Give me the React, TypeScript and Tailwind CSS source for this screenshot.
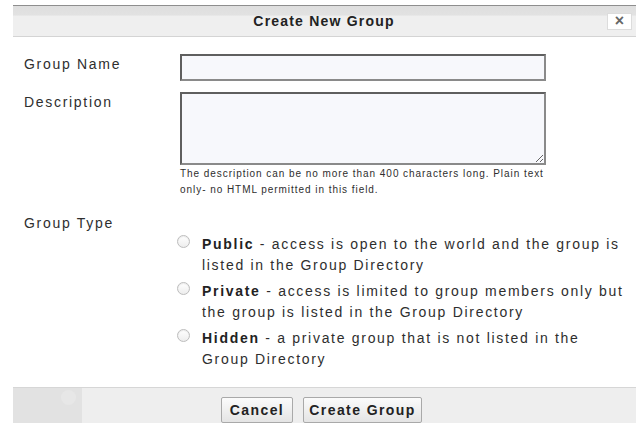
import React from "react";

const font = { fontFamily: '"Liberation Sans", Arial, Helvetica, sans-serif' };

function Radio() {
  return (
    <span className="mt-[1px] h-[13px] w-[13px] shrink-0 rounded-full border border-[#bdbdbd] bg-[linear-gradient(to_bottom,#ffffff,#ededed)] shadow-[inset_0_1px_1px_rgba(0,0,0,0.08)]" />
  );
}

function Option({ title, lines }: { title: string; lines: [string, string] }) {
  return (
    <label className="flex items-start gap-[12px]">
      <Radio />
      <span className="whitespace-nowrap text-[14px] leading-[21px] tracking-[1.7px] text-[#2e2e2e]">
        <b className="text-[#222]">{title}</b>
        {lines[0]}
        <br />
        {lines[1]}
      </span>
    </label>
  );
}

export default function App() {
  return (
    <div className="flex h-[423px] w-[636px] flex-col overflow-hidden bg-white" style={font}>
      {/* title bar */}
      <div className="ml-[13px] mt-[5px] flex h-[32px] items-center border-t border-b border-t-[#8e8e8e] border-b-[#d4d4d4] bg-[linear-gradient(to_bottom,#dedede_0%,#e2e2e2_30%,#efefef_34%,#efefef_100%)] pr-[4px]">
        <div className="flex-1 pl-[28px] text-center text-[14px] font-bold tracking-[1.2px] text-[#222]">
          Create New Group
        </div>
        <button className="flex h-[17px] w-[25px] items-center justify-center border border-[#dcdcdc] bg-white text-[16px] font-bold leading-none text-[#666]">
          ×
        </button>
      </div>

      {/* form body */}
      <div className="flex flex-1 flex-col pt-[17px]">
        <div className="flex items-start">
          <div className="w-[180px] pl-[24px] text-[14px] leading-[20px] tracking-[1.7px] text-[#2e2e2e]">Group Name</div>
          <input className="h-[27px] w-[366px] border-2 border-[#5f5f5f] border-b-[#8a8a8a] border-r-[#8a8a8a] bg-[#f7f8fc] outline-none" />
        </div>

        <div className="mt-[11px] flex items-start">
          <div className="w-[180px] pl-[24px] text-[14px] leading-[20px] tracking-[1.7px] text-[#2e2e2e]">Description</div>
          <div className="flex flex-col">
            <textarea className="block h-[73px] w-[366px] resize-y border-2 border-[#5f5f5f] border-b-[#8a8a8a] border-r-[#8a8a8a] bg-[#f7f8fc] outline-none" />
            <p className="mt-[1px] whitespace-nowrap text-[10px] leading-[16px] tracking-[0.95px] text-[#2e2e2e]">
              The description can be no more than 400 characters long. Plain text
              <br />
              only- no HTML permitted in this field.
            </p>
          </div>
        </div>

        <div className="mt-[15px] flex items-start">
          <div className="w-[177px] pl-[24px] text-[14px] leading-[20px] tracking-[1.7px] text-[#2e2e2e]">Group Type</div>
          <div className="flex flex-col gap-[5px] pt-[21px]">
            <Option title="Public" lines={[" - access is open to the world and the group is", "listed in the Group Directory"]} />
            <Option title="Private" lines={[" - access is limited to group members only but", "the group is listed in the Group Directory"]} />
            <Option title="Hidden" lines={[" - a private group that is not listed in the", "Group Directory"]} />
          </div>
        </div>
      </div>

      {/* button bar */}
      <div className="relative ml-[13px] flex h-[36px] items-start justify-center gap-[10px] border-t border-[#d6d6d6] bg-[#eeeeee] pr-[6px] pt-[9px]">
        <div className="absolute left-0 top-0 h-full w-[69px] bg-[#e2e2e2]">
          <div className="ml-[48px] mt-[2px] h-[15px] w-[15px] rounded-full bg-[#e7e7e7]" />
        </div>
        <button className="relative h-[26px] w-[72px] rounded-[2px] border border-[#a9a9a9] bg-[linear-gradient(to_bottom,#fbfbfb,#e4e4e4)] text-[14px] font-bold tracking-[1.4px] text-[#222]">
          Cancel
        </button>
        <button className="relative h-[26px] w-[119px] rounded-[2px] border border-[#a9a9a9] bg-[linear-gradient(to_bottom,#fbfbfb,#e4e4e4)] text-[14px] font-bold tracking-[1.4px] text-[#222]">
          Create Group
        </button>
      </div>
    </div>
  );
}
